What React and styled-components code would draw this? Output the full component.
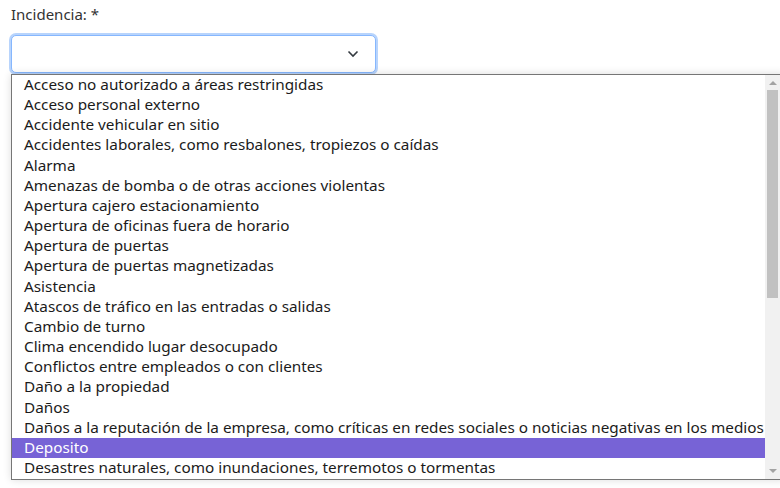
import React from 'react'
import styled, { createGlobalStyle } from 'styled-components'

const options = [
  'Acceso no autorizado a áreas restringidas',
  'Acceso personal externo',
  'Accidente vehicular en sitio',
  'Accidentes laborales, como resbalones, tropiezos o caídas',
  'Alarma',
  'Amenazas de bomba o de otras acciones violentas',
  'Apertura cajero estacionamiento',
  'Apertura de oficinas fuera de horario',
  'Apertura de puertas',
  'Apertura de puertas magnetizadas',
  'Asistencia',
  'Atascos de tráfico en las entradas o salidas',
  'Cambio de turno',
  'Clima encendido lugar desocupado',
  'Conflictos entre empleados o con clientes',
  'Daño a la propiedad',
  'Daños',
  'Daños a la reputación de la empresa, como críticas en redes sociales o noticias negativas en los medios',
  'Deposito',
  'Desastres naturales, como inundaciones, terremotos o tormentas',
]

const Global = createGlobalStyle`
  html, body {
    margin: 0;
    background: #fff;
    overflow: hidden;
  }
  body {
    font-family: "Noto Sans", "DejaVu Sans", sans-serif;
    color: #212529;
  }
`

const Page = styled.div`
  position: relative;
  width: 780px;
  height: 488px;
  padding: 4px 11px 0;
  box-sizing: border-box;
`

const Label = styled.label`
  display: block;
  font-size: 15px;
  line-height: 20px;
  color: #333;
  margin-bottom: 11px;
`

const Select = styled.div`
  width: 365px;
  height: 38px;
  box-sizing: border-box;
  border: 1px solid #86b7fe;
  border-radius: 5px;
  box-shadow: 0 0 0 2px #b8d4fc;
  display: flex;
  align-items: center;
  justify-content: flex-end;
  padding-right: 16px;
  background: #fff;
`

const List = styled.div`
  position: absolute;
  top: 74px;
  left: 11px;
  width: 775px;
  height: 406px;
  box-sizing: border-box;
  border: 1px solid #767676;
  background: #fff;
  box-shadow: 0 0 8px rgba(0, 0, 0, 0.14);
  display: flex;
`

const Options = styled.div`
  flex: 1;
  overflow: hidden;
`

const Option = styled.div`
  height: 20.16px;
  line-height: 18.6px;
  padding-left: 12px;
  font-size: 15.3px;
  white-space: nowrap;
  color: ${({ $active }) => ($active ? '#fff' : '#1b1b1b')};
  background: ${({ $active }) => ($active ? '#7763d6' : 'transparent')};
`

const Scrollbar = styled.div`
  width: 15px;
  margin-right: 5px;
  background: #f1f1f1;
  display: flex;
  flex-direction: column;
  align-items: center;
`

const Arrow = styled.div`
  width: 0;
  height: 0;
  border-left: 4px solid transparent;
  border-right: 4px solid transparent;
  ${({ $down }) =>
    $down ? 'border-top: 4px solid #a3a3a3;' : 'border-bottom: 4px solid #a3a3a3;'}
  margin: ${({ $down }) => ($down ? 'auto 0 6px' : '6px 0 0')};
`

const Thumb = styled.div`
  width: 11px;
  height: 208px;
  margin-top: 5px;
  background: #c1c1c1;
`

const Chevron = () => (
  <svg width='12' height='8' viewBox='0 0 12 8'>
    <path d='M1.5 1.5 L6 6 L10.5 1.5' fill='none' stroke='#343a40' strokeWidth='1.6' />
  </svg>
)

export default function App() {
  return (
    <Page>
      <Global />
      <Label>Incidencia: *</Label>
      <Select>
        <Chevron />
      </Select>
      <List>
        <Options>
          {options.map((o) => (
            <Option key={o} $active={o === 'Deposito'}>
              {o}
            </Option>
          ))}
        </Options>
        <Scrollbar>
          <Arrow />
          <Thumb />
          <Arrow $down />
        </Scrollbar>
      </List>
    </Page>
  )
}
